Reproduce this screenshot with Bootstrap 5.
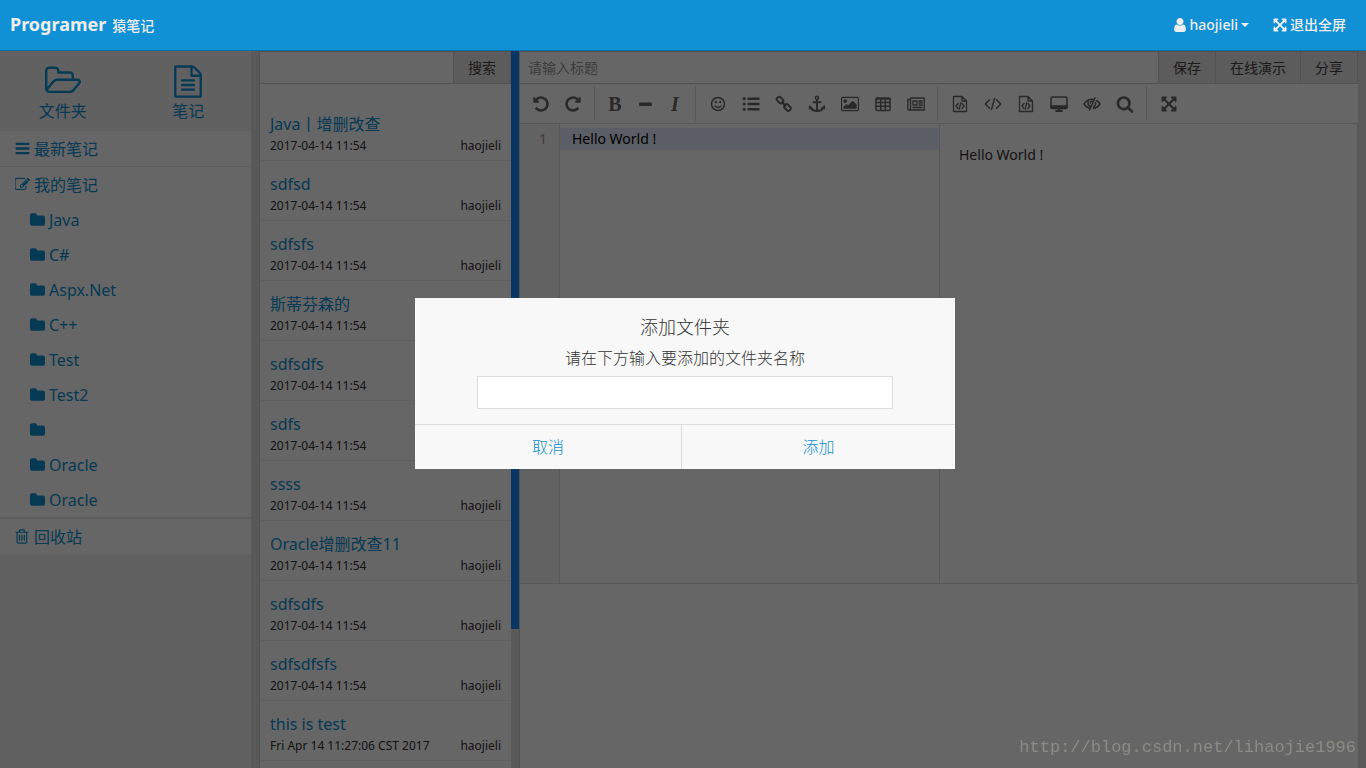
<!DOCTYPE html>
<html lang="zh-CN">
<head>
<meta charset="utf-8">
<meta name="viewport" content="width=device-width, initial-scale=1">
<title>Programer 猿笔记</title>
<link href="https://cdn.jsdelivr.net/npm/bootstrap@5.3.0/dist/css/bootstrap.min.css" rel="stylesheet">
<style>
  :root { --brand: #0e90d2; --line: #ddd; --faint: #eee; --soft: #f5f5f5; --gutter: #dfdfdf; }
  body { font-family: "Noto Sans", "Noto Sans CJK SC", sans-serif; font-size: 16px; line-height: 24px; color: #333; }
  a { color: var(--brand); text-decoration: none; }
  .ico { width: 16px; height: 16px; fill: currentColor; flex: none; display: block; }
  .ico-line { fill: none; stroke: currentColor; stroke-width: 1.5; stroke-linecap: round; stroke-linejoin: round; }
  .shell { height: 100vh; }

  .topbar { height: 51px; background: #1090d5; border-bottom: 1px solid #0b70a6; z-index: 1060; padding: 0 20px 0 10px; }
  .topbar a { color: #eee; }
  .topbar .brand-name { font-size: 18px; font-weight: 700; }
  .topbar .brand-sub, .topbar .top-link { font-size: 14px; font-weight: 500; }
  .topbar .brand-link { gap: 6px; }
  .topbar .ico { width: 14px; height: 14px; }
  .topbar .dropdown-toggle::after { margin-left: 0; }
  .topbar .top-link { gap: 3px; }

  .work { min-height: 0; background: var(--gutter); }
  .side { width: 251px; background: #f3f3f3; }
  .side-top a { height: 80px; padding-top: 12px; }
  .side-top .ico { width: 36px; height: 36px; }
  .side-row { height: 35px; padding: 0 15px; gap: 4px; background: #fff; }
  .side-row.rule-b { height: 36px; }
  .side-row.sub { padding-left: 30px; }
  .side-row .ico { width: 15px; height: 15px; }
  .rule-b { border-bottom: 1px solid #e8e8e8; }

  .notes { width: 260px; margin-left: 8px; border-left: 1px solid #ccc; }
  .notes-col { background: #fff; min-width: 0; }
  .bar { height: 33px; border: solid #ccc; border-width: 1px 1px 1px 0; }
  .bar input { border: 0; outline: 0; min-width: 0; width: 0; font-size: 14px; padding: 0 8px; background: #fff; }
  .bar input::placeholder { color: #999; }
  .bar button { border: 0; border-left: 1px solid #ccc; background: #e6e6e6; color: #444; font-size: 14px; padding: 0 14px; white-space: nowrap; }
  .note-list { padding-top: 17px; }
  .note { height: 60px; padding: 11px 10px 0; border-bottom: 1px solid var(--faint); }
  .note-meta { font-size: 12px; line-height: 20px; }
  .scroll-track { width: 8px; }
  .scroll-thumb { height: 578px; background: #1b87fa; }

  .edit { background: #fff; margin-right: 8px; min-width: 0; border-left: 1px solid #ccc; }
  .tools { height: 40px; padding: 2px 0; border-bottom: 1px solid var(--line); }
  .tool-set { padding: 0 5px; border-right: 1px solid var(--line); }
  .tool-set:last-child { border-right: 0; }
  .tool-set button { border: 0; background: none; padding: 0; width: 33px; color: #666; display: flex; align-items: center; justify-content: center; }
  .tool-set.set-history button { width: 32px; }
  .tool-set.set-format button { width: 30px; }
  .tool-set .ico { width: 18px; height: 18px; }
  .tool-set .letter { font: bold 20px/24px "Liberation Serif", serif; }
  .panes { height: 460px; border-bottom: 1px solid var(--line); border-right: 1px solid var(--line); font-size: 14px; line-height: 22px; color: #000; }
  .line-no { width: 40px; background: var(--soft); border-right: 1px solid var(--line); color: #999; padding: 4px 12px; }
  .code-pane { width: 380px; padding-top: 4px; border-right: 1px solid var(--line); }
  .code-pane .now { background: #e6ecff; padding-left: 12px; }
  .preview { padding: 20px 19px; color: #333; }

  .modal-backdrop.dim { opacity: .6; }
  .modal { padding: 0 0 2px 4px; color: #333; font-weight: 300; }
  .modal-dialog { max-width: 540px; }
  .modal-content { border: 0; border-radius: 0; background: #f8f8f8; }
  .modal-title { font-size: 18px; line-height: 28px; font-weight: 300; }
  .prompt { padding: 15px 62px 15px; }
  .prompt input { height: 33px; border: 1px solid var(--line); border-radius: 0; }
  .prompt label { line-height: 35px; }
  .choices { border-top: 1px solid var(--line); height: 45px; }
  .choices button { border: 0; background: none; color: var(--brand); font-weight: 300; }
  .choices .cancel { width: 267px; border-right: 1px solid var(--line); }

  .watermark { right: 10px; bottom: 8px; z-index: 1056; font: 17px/24px "Liberation Mono", monospace; color: #8c8c86; pointer-events: none; }
</style>
</head>
<body>
<svg class="d-none" aria-hidden="true">
  <symbol id="bars" viewBox="128 64 1536 1664"><path d="M1664 1344v128q0 26-19 45t-45 19h-1408q-26 0-45-19t-19-45v-128q0-26 19-45t45-19h1408q26 0 45 19t19 45zm0-512v128q0 26-19 45t-45 19h-1408q-26 0-45-19t-19-45v-128q0-26 19-45t45-19h1408q26 0 45 19t19 45zm0-512v128q0 26-19 45t-45 19h-1408q-26 0-45-19t-19-45v-128q0-26 19-45t45-19h1408q26 0 45 19t19 45z"/></symbol>
  <symbol id="folder" viewBox="64 0 1664 1664"><path d="M1728 608v704q0 92-66 158t-158 66h-1216q-92 0-158-66t-66-158v-960q0-92 66-158t158-66h320q92 0 158 66t66 158v32h672q92 0 158 66t66 158z"/></symbol>
  <symbol id="folder-open" viewBox="64 0 1909 1792"><path d="M1845 931q0-35-53-35h-1088q-40 0-85.500 21.500t-71.500 52.500l-294 363q-18 24-18 40 0 35 53 35h1088q40 0 86-22t71-53l294-363q18-22 18-39zm-1141-163h768v-160q0-40-28-68t-68-28h-576q-40 0-68-28t-28-68v-64q0-40-28-68t-68-28h-320q-40 0-68 28t-28 68v853l256-315q44-53 116-87.500t140-34.500zm1269 163q0 62-46 120l-295 363q-43 53-116 87.500t-140 34.500h-1088q-92 0-158-66t-66-158v-960q0-92 66-158t158-66h320q92 0 158 66t66 158v32h544q92 0 158 66t66 158v160h192q54 0 99 24.500t67 70.500q15 32 15 68z"/></symbol>
  <symbol id="file-text" viewBox="0 -130 1792 1992"><path d="M1596 380q28 28 48 76t20 88v1152q0 40-28 68t-68 28h-1344q-40 0-68-28t-28-68v-1600q0-40 28-68t68-28h896q40 0 88 20t76 48zm-444-244v376h376q-10-29-22-41l-313-313q-12-12-41-22zm384 1528v-1024h-416q-40 0-68-28t-28-68v-416h-768v1536h1280zm-1024-864q0-14 9-23t23-9h704q14 0 23 9t9 23v64q0 14-9 23t-23 9h-704q-14 0-23-9t-9-23v-64zm736 224q14 0 23 9t9 23v64q0 14-9 23t-23 9h-704q-14 0-23-9t-9-23v-64q0-14 9-23t23-9h704zm0 256q14 0 23 9t9 23v64q0 14-9 23t-23 9h-704q-14 0-23-9t-9-23v-64q0-14 9-23t23-9h704z"/></symbol>
  <symbol id="user" viewBox="256 128 1280 1536"><path d="M1536 1399q0 109-62.500 187t-150.500 78h-854q-88 0-150.500-78t-62.500-187q0-85 8.500-160.500t31.500-152 58.500-131 94-89 134.500-34.500q131 128 313 128t313-128q76 0 134.500 34.500t94 89 58.500 131 31.500 152 8.500 160.500zm-256-887q0 159-112.500 271.500t-271.500 112.500-271.500-112.500-112.500-271.500 112.500-271.500 271.500-112.500 271.500 112.500 112.500 271.500z"/></symbol>
  <symbol id="expand" viewBox="64 64 1664 1664"><path d="M1411 541l-355 355 355 355 144-144q29-31 70-14 39 17 39 59v448q0 26-19 45t-45 19h-448q-42 0-59-40-17-39 14-69l144-144-355-355-355 355 144 144q31 30 14 69-17 40-59 40h-448q-26 0-45-19t-19-45v-448q0-42 40-59 39-17 69 14l144 144 355-355-355-355-144 144q-19 19-45 19-12 0-24-5-40-17-40-59v-448q0-26 19-45t45-19h448q42 0 59 40 17 39-14 69l-144 144 355 355 355-355-144-144q-31-30-14-69 17-40 59-40h448q26 0 45 19t19 45v448q0 42-39 59-13 5-25 5-26 0-45-19z"/></symbol>
  <symbol id="redo" viewBox="0 0 1792 1792"><path d="M1664 256v448q0 26-19 45t-45 19h-448q-42 0-59-40-17-39 14-69l138-138q-148-137-349-137-104 0-198.500 40.500t-163.500 109.500-109.500 163.500-40.500 198.500 40.500 198.500 109.500 163.500 163.500 109.500 198.500 40.500q119 0 225-52t179-147q7-10 23-12 15 0 25 9l137 138q9 8 9.500 20.500t-7.500 22.500q-109 132-264 204.500t-327 72.500q-156 0-298-61t-245-164-164-245-61-298 61-298 164-245 245-164 298-61q147 0 284.500 55.500t244.500 156.500l130-129q29-31 70-14 39 17 39 59z"/></symbol>
  <symbol id="search" viewBox="0 0 1792 1792"><path d="M1216 832q0-185-131.500-316.500t-316.500-131.500-316.500 131.500-131.500 316.500 131.500 316.500 316.500 131.500 316.500-131.500 131.500-316.500zm512 832q0 52-38 90t-90 38q-54 0-90-38l-343-342q-179 124-399 124-143 0-273.500-55.500t-225-150-150-225-55.500-273.500 55.500-273.500 150-225 225-150 273.500-55.500 273.500 55.500 225 150 150 225 55.500 273.500q0 220-124 399l343 343q37 37 37 90z"/></symbol>
  <symbol id="trash" viewBox="256 100 1408 1600"><path d="M704 736v576q0 14-9 23t-23 9h-64q-14 0-23-9t-9-23v-576q0-14 9-23t23-9h64q14 0 23 9t9 23zm256 0v576q0 14-9 23t-23 9h-64q-14 0-23-9t-9-23v-576q0-14 9-23t23-9h64q14 0 23 9t9 23zm256 0v576q0 14-9 23t-23 9h-64q-14 0-23-9t-9-23v-576q0-14 9-23t23-9h64q14 0 23 9t9 23zm128 724v-948h-896v948q0 22 7 40.500t14.500 27 10.500 8.500h832q3 0 10.500-8.500t14.500-27 7-40.500zm-672-1076h448l-48-117q-7-9-17-11h-317q-10 2-17 11zm928 32v64q0 14-9 23t-23 9h-96v948q0 83-47 143.500t-113 60.500h-832q-66 0-113-58.500t-47-141.500v-952h-96q-14 0-23-9t-9-23v-64q0-14 9-23t23-9h309l70-167q15-37 54-63t79-26h320q40 0 79 26t54 63l70 167h309q14 0 23 9t9 23z"/></symbol>
  <symbol id="pencil" viewBox="64 128 1728 1536"><path d="M888 1184l116-116-152-152-116 116v56h96v96h56zm440-720q-16-16-33 1l-350 350q-17 17-1 33t33-1l350-350q17-17 1-33zm80 594v190q0 119-84.500 203.500t-203.500 84.500h-832q-119 0-203.500-84.500t-84.500-203.500v-832q0-119 84.500-203.500t203.500-84.500h832q63 0 117 25 15 7 18 23 3 17-9 29l-49 49q-14 14-32 8-23-6-45-6h-832q-66 0-113 47t-47 113v832q0 66 47 113t113 47h832q66 0 113-47t47-113v-126q0-13 9-22l64-64q15-15 35-7t20 29zm-96-738l288 288-672 672h-288v-288zm444 132l-92 92-288-288 92-92q28-28 68-28t68 28l152 152q28 28 28 68t-28 68z"/></symbol>
  <symbol id="image" viewBox="-64 0 1920 1792"><path d="M576 576q0 80-56 136t-136 56-136-56-56-136 56-136 136-56 136 56 56 136zm1024 384v448h-1408v-192l320-320 160 160 512-512zm96-704h-1600q-13 0-22.500 9.500t-9.500 22.500v1216q0 13 9.500 22.500t22.500 9.500h1600q13 0 22.500-9.500t9.500-22.500v-1216q0-13-9.500-22.500t-22.500-9.500zm160 32v1216q0 66-47 113t-113 47h-1600q-66 0-113-47t-47-113v-1216q0-66 47-113t113-47h1600q66 0 113 47t47 113z"/></symbol>
  <symbol id="file-code" viewBox="0 0 18 18"><path d="M2.500 1.500h8.500l4.500 4.500v10.500H2.500zM11 1.500v4.500H15.500M7 8.500L5 11l2 2.500M11 8.500L13 11l-2 2.500M9.600 8l-1.200 6" stroke-width="1.300"/></symbol>
</svg>

<div class="shell d-flex flex-column overflow-hidden">
  <header class="topbar position-relative d-flex align-items-center justify-content-between flex-shrink-0">
    <a href="#" class="brand-link d-flex align-items-baseline"><span class="brand-name">Programer</span><span class="brand-sub">猿笔记</span></a>
    <nav class="d-flex gap-4" aria-label="账户">
      <a href="#" class="top-link dropdown-toggle d-flex align-items-center"><svg class="ico"><use href="#user"/></svg>haojieli</a>
      <a href="#" class="top-link d-flex align-items-center"><svg class="ico"><use href="#expand"/></svg>退出全屏</a>
    </nav>
  </header>

  <div class="work d-flex flex-grow-1">
    <aside class="side flex-shrink-0">
      <div class="side-top row g-0 text-center">
        <a href="#" class="col d-flex flex-column align-items-center"><svg class="ico"><use href="#folder-open"/></svg>文件夹</a>
        <a href="#" class="col d-flex flex-column align-items-center"><svg class="ico"><use href="#file-text"/></svg>笔记</a>
      </div>
      <nav aria-label="笔记目录">
        <a href="#" class="side-row rule-b d-flex align-items-center"><svg class="ico"><use href="#bars"/></svg>最新笔记</a>
        <a href="#" class="side-row d-flex align-items-center"><svg class="ico"><use href="#pencil"/></svg>我的笔记</a>
        <a href="#" class="side-row sub d-flex align-items-center"><svg class="ico"><use href="#folder"/></svg>Java</a>
        <a href="#" class="side-row sub d-flex align-items-center"><svg class="ico"><use href="#folder"/></svg>C#</a>
        <a href="#" class="side-row sub d-flex align-items-center"><svg class="ico"><use href="#folder"/></svg>Aspx.Net</a>
        <a href="#" class="side-row sub d-flex align-items-center"><svg class="ico"><use href="#folder"/></svg>C++</a>
        <a href="#" class="side-row sub d-flex align-items-center"><svg class="ico"><use href="#folder"/></svg>Test</a>
        <a href="#" class="side-row sub d-flex align-items-center"><svg class="ico"><use href="#folder"/></svg>Test2</a>
        <a href="#" class="side-row sub d-flex align-items-center" aria-label="未命名"><svg class="ico"><use href="#folder"/></svg></a>
        <a href="#" class="side-row sub d-flex align-items-center"><svg class="ico"><use href="#folder"/></svg>Oracle</a>
        <a href="#" class="side-row sub d-flex align-items-center"><svg class="ico"><use href="#folder"/></svg>Oracle</a>
        <div class="rule-b"></div><div class="rule-b"></div>
        <a href="#" class="side-row d-flex align-items-center"><svg class="ico"><use href="#trash"/></svg>回收站</a>
      </nav>
    </aside>

    <section class="notes d-flex flex-shrink-0">
      <div class="notes-col flex-grow-1">
        <form class="bar d-flex"><input class="flex-grow-1" type="text" aria-label="搜索笔记"><button type="button">搜索</button></form>
        <div class="note-list">
          <article class="note"><a href="#">Java丨增删改查</a><div class="note-meta d-flex justify-content-between"><span>2017-04-14 11:54</span><span>haojieli</span></div></article>
          <article class="note"><a href="#">sdfsd</a><div class="note-meta d-flex justify-content-between"><span>2017-04-14 11:54</span><span>haojieli</span></div></article>
          <article class="note"><a href="#">sdfsfs</a><div class="note-meta d-flex justify-content-between"><span>2017-04-14 11:54</span><span>haojieli</span></div></article>
          <article class="note"><a href="#">斯蒂芬森的</a><div class="note-meta d-flex justify-content-between"><span>2017-04-14 11:54</span><span>haojieli</span></div></article>
          <article class="note"><a href="#">sdfsdfs</a><div class="note-meta d-flex justify-content-between"><span>2017-04-14 11:54</span><span>haojieli</span></div></article>
          <article class="note"><a href="#">sdfs</a><div class="note-meta d-flex justify-content-between"><span>2017-04-14 11:54</span><span>haojieli</span></div></article>
          <article class="note"><a href="#">ssss</a><div class="note-meta d-flex justify-content-between"><span>2017-04-14 11:54</span><span>haojieli</span></div></article>
          <article class="note"><a href="#">Oracle增删改查11</a><div class="note-meta d-flex justify-content-between"><span>2017-04-14 11:54</span><span>haojieli</span></div></article>
          <article class="note"><a href="#">sdfsdfs</a><div class="note-meta d-flex justify-content-between"><span>2017-04-14 11:54</span><span>haojieli</span></div></article>
          <article class="note"><a href="#">sdfsdfsfs</a><div class="note-meta d-flex justify-content-between"><span>2017-04-14 11:54</span><span>haojieli</span></div></article>
          <article class="note"><a href="#">this is test</a><div class="note-meta d-flex justify-content-between"><span>Fri Apr 14 11:27:06 CST 2017</span><span>haojieli</span></div></article>
        </div>
      </div>
      <div class="scroll-track flex-shrink-0"><div class="scroll-thumb"></div></div>
    </section>

    <main class="edit flex-grow-1">
      <form class="bar d-flex"><input class="flex-grow-1" type="text" placeholder="请输入标题" aria-label="标题"><button type="button">保存</button><button type="button">在线演示</button><button type="button">分享</button></form>
      <div class="tools d-flex" role="toolbar" aria-label="编辑工具">
        <div class="tool-set set-history d-flex">
          <button type="button" aria-label="撤销"><svg class="ico" viewBox="0 0 18 18"><g transform="translate(18 0) scale(-1 1)"><use href="#redo" width="18" height="18"/></g></svg></button>
          <button type="button" aria-label="重做"><svg class="ico"><use href="#redo"/></svg></button>
        </div>
        <div class="tool-set set-format d-flex">
          <button type="button" class="letter">B</button>
          <button type="button" aria-label="横线"><svg class="ico" viewBox="0 0 18 18"><rect x="3" y="7.500" width="13" height="3.500" rx="1"/></svg></button>
          <button type="button" class="letter fst-italic">I</button>
        </div>
        <div class="tool-set d-flex">
          <button type="button" aria-label="表情"><svg class="ico ico-line" viewBox="0 0 18 18"><circle cx="9" cy="9" r="6.500"/><path d="M6 11q3 3 6 0"/><path d="M6.800 6.800v.4M11.200 6.800v.4" stroke-width="2"/></svg></button>
          <button type="button" aria-label="列表"><svg class="ico" viewBox="0 0 18 18"><path d="M5.500 2.500H17.500v2.400H5.500zM5.500 7.800H17.500v2.400H5.500zM5.500 13.100H17.500v2.400H5.500z"/><circle cx="2.200" cy="3.700" r="1.600"/><circle cx="2.200" cy="9" r="1.600"/><circle cx="2.200" cy="14.300" r="1.600"/></svg></button>
          <button type="button" aria-label="链接"><svg class="ico ico-line" viewBox="0 0 18 18"><g stroke-width="2"><rect x="1.500" y="2.800" width="7" height="4.600" rx="2" transform="rotate(45 5 5.100)"/><rect x="9" y="10.200" width="7" height="4.600" rx="2" transform="rotate(45 12.500 12.500)"/><path d="M7 7.300l3.600 3.400"/></g></svg></button>
          <button type="button" aria-label="锚点"><svg class="ico ico-line" viewBox="0 0 18 18"><circle cx="9" cy="2.800" r="1.600"/><path d="M9 4.800v10.500M5.500 7.200h7" stroke-width="2"/><path d="M2.200 12.200q2 3.600 6.800 3.800 4.800-.2 6.800-3.800" stroke-width="2.200"/><path d="M1.300 14v-3.500l3 2.200zM16.700 14v-3.500l-3 2.200z" fill="currentColor" stroke-width=".6"/></svg></button>
          <button type="button" aria-label="图片"><svg class="ico"><use href="#image"/></svg></button>
          <button type="button" aria-label="表格"><svg class="ico ico-line" viewBox="0 0 18 18"><rect x="2" y="3" width="14" height="12.500" rx="1"/><path d="M2 4h14M2 7.500h14M2 11.300h14M6.700 4v11M11.300 4v11"/></svg></button>
          <button type="button" aria-label="分页"><svg class="ico ico-line" viewBox="0 0 18 18"><path d="M3.500 3H17.300v12H2.200Q.8 15 .8 13.500V4.500H3.500V13.500Q3.500 15 2.200 15" stroke-width="1.300"/><path d="M6 6h4v4H6zM12 6h3.200M12 8h3.200M12 10h3.200M6 12.500h9.200" stroke-width="1.300"/></svg></button>
        </div>
        <div class="tool-set d-flex">
          <button type="button" aria-label="行内代码"><svg class="ico ico-line"><use href="#file-code"/></svg></button>
          <button type="button" aria-label="代码"><svg class="ico ico-line" viewBox="0 0 18 18"><path d="M5.500 4.800L1.300 9l4.200 4.200M12.500 4.800L16.700 9l-4.200 4.200M10.500 3.500l-3 11"/></svg></button>
          <button type="button" aria-label="代码块"><svg class="ico ico-line"><use href="#file-code"/></svg></button>
          <button type="button" aria-label="实时预览"><svg class="ico ico-line" viewBox="0 0 18 18"><rect x="1" y="2" width="16" height="11.500" rx="1"/><path d="M1.500 11.800h15" stroke-width="3"/><path d="M9 13v2.500M6.200 16h5.600" stroke-width="2"/></svg></button>
          <button type="button" aria-label="关闭预览"><svg class="ico ico-line" viewBox="0 0 18 18"><path d="M7.500 13.500Q3.500 12.800 1 9q3-4.800 8-4.800 1 0 2 .3M13.500 5.500Q15.800 7 17 9q-2.200 3.800-6.500 4.600M12 3L6.500 15M5.500 6q-1.500 3.500 1.700 5.500M12.500 7.500q.6 3-2 4.500M9 6q-1.500.4-1.700 2"/></svg></button>
          <button type="button" aria-label="查找"><svg class="ico"><use href="#search"/></svg></button>
        </div>
        <div class="tool-set d-flex">
          <button type="button" aria-label="全屏"><svg class="ico" viewBox="-1 -1 20 20"><use href="#expand" width="18" height="18"/></svg></button>
        </div>
      </div>
      <div class="panes d-flex">
        <div class="line-no text-end flex-shrink-0">1</div>
        <div class="code-pane flex-shrink-0"><div class="now">Hello World !</div></div>
        <div class="preview flex-grow-1">Hello World !</div>
      </div>
    </main>
  </div>
</div>

<div class="modal-backdrop dim"></div>
<div class="modal d-block" role="dialog" aria-modal="true" aria-labelledby="dlg-title">
  <div class="modal-dialog modal-dialog-centered">
    <form class="modal-content">
      <div class="prompt text-center">
        <h1 class="modal-title" id="dlg-title">添加文件夹</h1>
        <label class="d-block" for="folder-name">请在下方输入要添加的文件夹名称</label>
        <input class="form-control" id="folder-name" type="text">
      </div>
      <div class="choices d-flex">
        <button type="button" class="cancel">取消</button>
        <button type="button" class="flex-grow-1">添加</button>
      </div>
    </form>
  </div>
</div>
<div class="watermark position-fixed">http://blog.csdn.net/lihaojie1996</div>
<script src="https://cdn.jsdelivr.net/npm/bootstrap@5.3.0/dist/js/bootstrap.bundle.min.js"></script>
</body>
</html>
